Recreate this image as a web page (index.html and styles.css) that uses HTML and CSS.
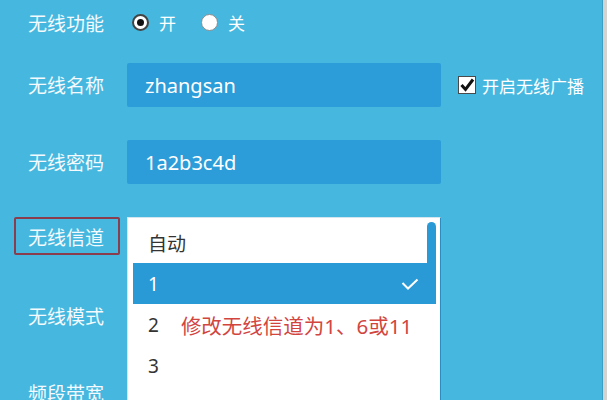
FILE: index.html
```html
<!DOCTYPE html>
<html lang="zh-CN">
<head>
    <meta charset="UTF-8">
    <meta name="viewport" content="width=device-width, initial-scale=1.0">
    <title>无线设置</title>
    <link rel="stylesheet" href="styles.css">
</head>
<body>
    <div class="page">
        <div class="form">
            <div class="row row-switch">
                <span class="label">无线功能</span>
                <span class="radio checked"></span>
                <span class="radio-text">开</span>
                <span class="radio"></span>
                <span class="radio-text">关</span>
            </div>
            <div class="row">
                <span class="label">无线名称</span>
                <div class="field">zhangsan</div>
                <span class="checkbox">
                    <svg width="18" height="18" viewBox="0 0 18 18">
                        <rect x="0.5" y="0.5" width="17" height="17" fill="#fff" stroke="#4a4a4a"/>
                        <polyline points="3.5,9 7.5,13.5 15,3.5" fill="none" stroke="#111" stroke-width="3"/>
                    </svg>
                </span>
                <span class="check-text">开启无线广播</span>
            </div>
            <div class="row">
                <span class="label">无线密码</span>
                <div class="field">1a2b3c4d</div>
            </div>
            <div class="row">
                <span class="label boxed">无线信道</span>
                <div class="select">
                    <ul class="menu">
                        <li class="item">自动</li>
                        <li class="item active">
                            1
                            <svg class="tick" width="18" height="12" viewBox="0 0 18 12">
                                <polyline points="1.5,5 7,10.5 16.5,1.5" fill="none" stroke="#fff" stroke-width="2"/>
                            </svg>
                        </li>
                        <li class="item">2<span class="note">修改无线信道为1、6或11</span></li>
                        <li class="item">3</li>
                    </ul>
                    <div class="thumb"></div>
                </div>
            </div>
            <div class="row">
                <span class="label">无线模式</span>
            </div>
            <div class="row">
                <span class="label">频段带宽</span>
            </div>
        </div>
    </div>
</body>
</html>
```

FILE: styles.css
```css
body {
    margin: 0;
    background-color: #d5d3cf;
    font-family: "Noto Sans", "Noto Sans CJK SC", sans-serif;
}
.page {
    width: 602px;
    height: 400px;
    overflow: hidden;
    background-color: #46b8df;
    border-right: 1px solid #3a9fc4;
}
.form {
    padding-left: 14px;
}
.row {
    display: flex;
    align-items: center;
    height: 44px;
    margin-bottom: 33px;
}
.row-switch {
    height: 45px;
    margin-bottom: 18px;
}
.label {
    box-sizing: border-box;
    width: 106px;
    margin-right: 7px;
    padding-left: 13px;
    border: 1px solid transparent;
    color: #f4fafd;
    font-size: 19px;
}
.boxed {
    align-self: flex-start;
    height: 38px;
    padding-top: 2px;
    display: flex;
    align-items: center;
    border: 2px solid #8a3d4c;
    border-radius: 2px;
    padding-left: 12px;
}
.radio {
    box-sizing: border-box;
    width: 17px;
    height: 17px;
    margin-left: 5px;
    border: 1px solid #8c8c8c;
    border-radius: 50%;
    background: #fff;
    position: relative;
}
.radio.checked {
    border: 2px solid #444;
}
.radio.checked::after {
    content: "";
    position: absolute;
    left: 3px;
    top: 3px;
    width: 7px;
    height: 7px;
    border-radius: 50%;
    background: #111;
}
.radio-text {
    margin-left: 10px;
    margin-right: 20px;
    color: #fff;
    font-size: 17px;
}
.field {
    box-sizing: border-box;
    width: 314px;
    height: 44px;
    padding-left: 18px;
    display: flex;
    align-items: center;
    background-color: #2c9dd8;
    border-radius: 2px;
    color: #fff;
    font-size: 20px;
}
.checkbox {
    display: flex;
    margin-left: 17px;
}
.check-text {
    margin-left: 6px;
    color: #fff;
    font-size: 17px;
}
.select {
    position: relative;
    width: 314px;
    height: 44px;
    align-self: flex-start;
}
.menu {
    position: absolute;
    left: 0;
    top: 0;
    box-sizing: border-box;
    width: 314px;
    height: 200px;
    margin: 0;
    padding: 4px 4px 0 5px;
    list-style: none;
    background: #fff;
    border: 1px solid #d3e6ef;
    border-right: 1px solid #2b8cbf;
}
.item {
    height: 41px;
    padding-left: 15px;
    display: flex;
    align-items: center;
    color: #333;
    font-size: 19px;
}
.item.active {
    background-color: #2a9ad6;
    color: #fff;
    position: relative;
}
.tick {
    position: absolute;
    right: 17px;
    top: 15px;
}
.note {
    margin-left: 22px;
    color: #d2453f;
    font-size: 20.5px;
}
.thumb {
    position: absolute;
    right: 5px;
    top: 5px;
    width: 9px;
    height: 82px;
    border-radius: 5px 5px 0 0;
    background-color: #2a9ad6;
}
```
